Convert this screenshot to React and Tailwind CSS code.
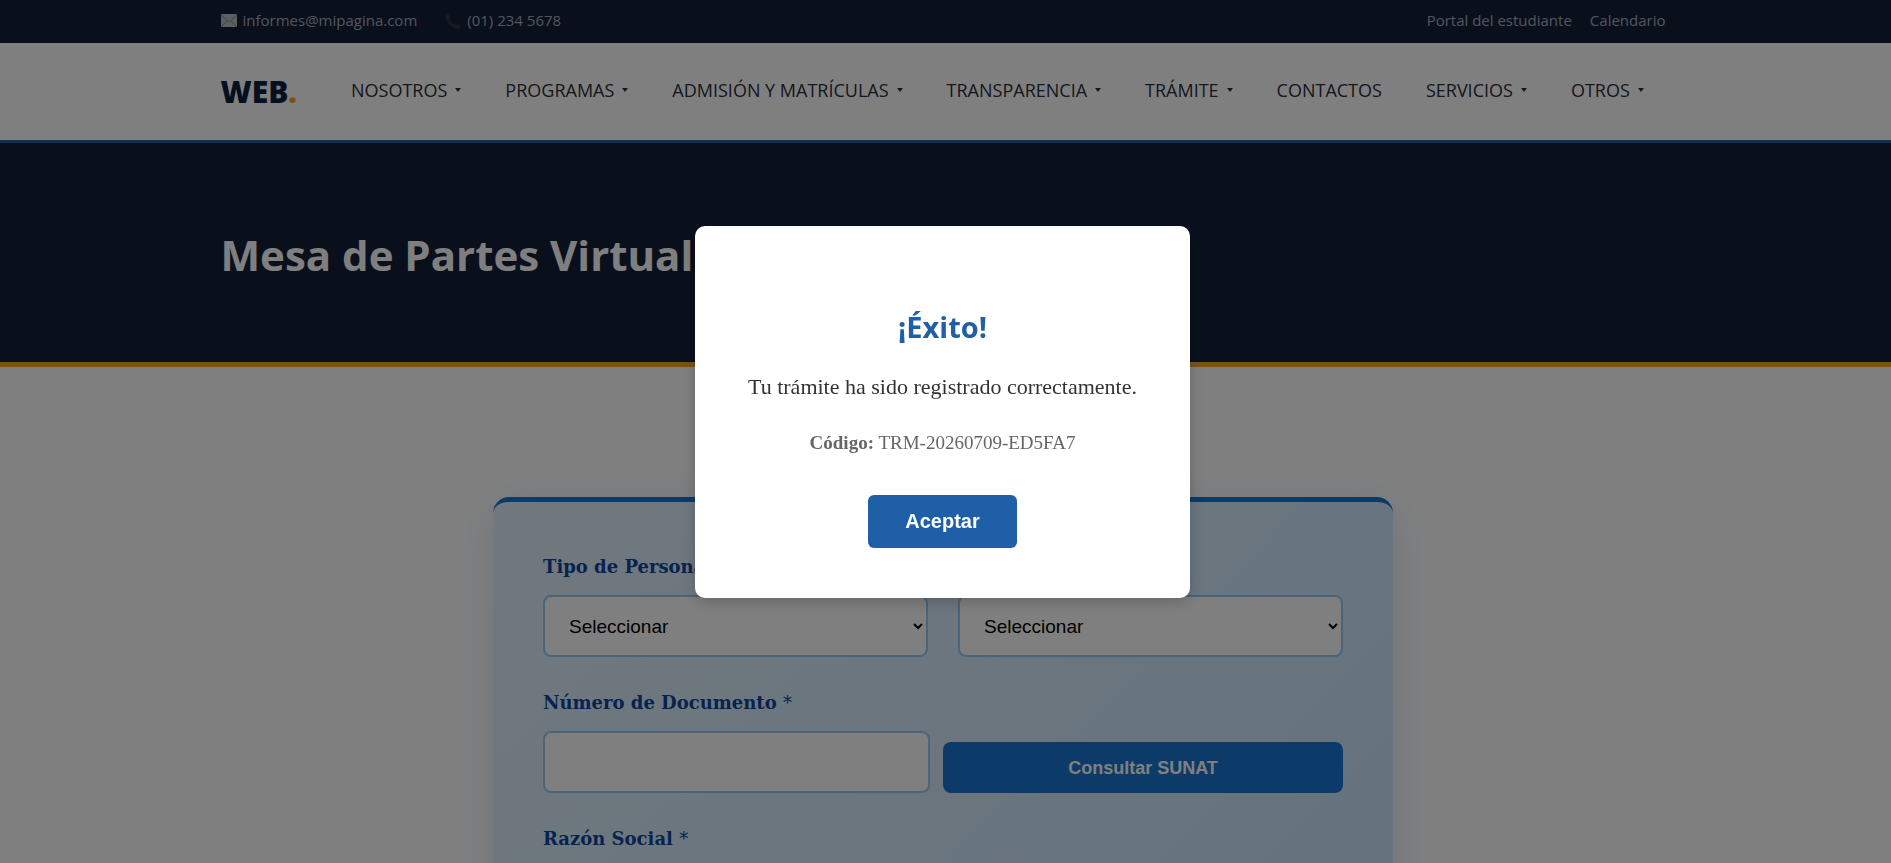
import React, { useState } from 'react';

const navItems = [
  { label: 'NOSOTROS', menu: true },
  { label: 'PROGRAMAS', menu: true },
  { label: 'ADMISIÓN Y MATRÍCULAS', menu: true },
  { label: 'TRANSPARENCIA', menu: true },
  { label: 'TRÁMITE', menu: true },
  { label: 'CONTACTOS', menu: false },
  { label: 'SERVICIOS', menu: true },
  { label: 'OTROS', menu: true },
];

const MailIcon = () => (
  <svg width="16" height="13" viewBox="0 0 16 13" aria-hidden="true">
    <rect width="16" height="13" rx="1" fill="#b8bcc0" />
    <path d="M0.5 1 L6.5 7 Q8 8.2 9.5 7 L15.5 1 M0.5 12.5 L6 6.8 M15.5 12.5 L10 6.8" fill="none" stroke="#7d848a" strokeWidth="1" />
  </svg>
);

const PhoneIcon = () => (
  <svg width="16" height="16" viewBox="0 0 16 16" aria-hidden="true">
    <path d="M1.2 0.8 Q2.6 -0.4 3.8 0.8 L5.2 3.2 Q5.6 4.4 4.4 5.2 Q4.2 8.6 8.8 11.2 L10.4 10.6 Q11.4 9.8 12.4 10.6 L15.2 12.4 Q16.4 13.6 14.8 15 Q12.6 16.8 8.4 14.6 Q1.8 11 0.4 4.8 Q-0.2 2.2 1.2 0.8 Z" fill="#2f3335" />
  </svg>
);

const TopBar = () => (
  <div className="pr-[5px] bg-[#132039] text-[#a5adb8] text-[15px] leading-[23px]">
    <div className="max-w-[1445px] mx-auto pt-[9px] pb-[11px] flex justify-between">
      <div className="flex gap-7">
        <span className="flex items-center gap-[6px]"><MailIcon /> informes@mipagina.com</span>
        <span className="flex items-center gap-[6px]"><PhoneIcon /> (01) 234 5678</span>
      </div>
      <div className="flex gap-[18px]">
        <a href="#portal">Portal del estudiante</a>
        <a href="#calendario">Calendario</a>
      </div>
    </div>
  </div>
);

const NavBar = () => (
  <header className="pr-[5px] bg-white border-b-[3px] border-[#1e5fa8]">
    <div className="max-w-[1445px] h-[97px] mx-auto flex items-center">
      <a href="#inicio" className="text-[30px] font-extrabold text-[#0b1f3f] mr-[54px]">
        WEB<span className="text-[#f5a623]">.</span>
      </a>
      <nav className="flex gap-11 pb-1 text-lg font-medium text-[#2b2f3a] whitespace-nowrap">
        {navItems.map((item) => (
          <a key={item.label} href="#menu" className="flex items-center gap-2">
            {item.label}
            {item.menu && (
              <svg width="6" height="4" viewBox="0 0 6 4" aria-hidden="true"><path d="M0 0h6L3 4z" fill="currentColor" /></svg>
            )}
          </a>
        ))}
      </nav>
    </div>
  </header>
);

const Field = ({ id, label, children }) => (
  <div className="flex flex-col gap-[14px]">
    <label htmlFor={id} className="text-lg leading-7 font-bold text-[#0d47a1]">
      {label} <span className="font-normal">*</span>
    </label>
    {children}
  </div>
);

const inputClass = 'w-full h-[62px] bg-white border-2 border-[#90caf9] rounded-lg text-black text-[19px] font-["Liberation_Sans",sans-serif]';

const TramiteForm = () => (
  <form className="max-w-[900px] min-h-[1200px] mx-auto px-[50px] pt-[51px] pb-12 border-t-[5px] border-[#1976d2] rounded-2xl bg-linear-135 from-[#e3f2fd] to-[#bbdefb] shadow-[0_10px_40px_rgba(25,118,210,0.15)] space-y-8 font-['DejaVu_Serif',serif]">
    <div className="grid grid-cols-2 gap-[30px]">
      <Field id="persona" label="Tipo de Persona">
        <select id="persona" className={`${inputClass} pl-5 pr-[2px]`}>
          <option>Seleccionar</option>
        </select>
      </Field>
      <Field id="tramite" label="Tipo de Trámite">
        <select id="tramite" className={`${inputClass} pl-5 pr-[2px]`}>
          <option>Seleccionar</option>
        </select>
      </Field>
    </div>
    <div className="flex items-end gap-[13px]">
      <div className="w-[387px]">
        <Field id="documento" label="Número de Documento">
          <input id="documento" type="text" className={`${inputClass} px-6`} />
        </Field>
      </div>
      <button type="button" className="flex-1 h-[51px] rounded-lg bg-[#1976d2] text-white text-lg font-bold font-['Liberation_Sans',sans-serif]">
        Consultar SUNAT
      </button>
    </div>
    <Field id="razon" label="Razón Social">
      <input id="razon" type="text" className={`${inputClass} px-6`} />
    </Field>
  </form>
);

const SuccessModal = ({ onClose }) => (
  <div className="fixed inset-0 pr-[6px] bg-black/50 flex items-center justify-center">
    <div role="dialog" aria-labelledby="exito" className="w-[495px] mb-10 pt-[81px] pb-[50px] flex flex-col items-center bg-white rounded-[10px] shadow-[0_4px_15px_rgba(0,0,0,0.2)]">
      <h2 id="exito" className="text-[29px] leading-10 font-bold text-[#1e5fa8]">¡Éxito!</h2>
      <p className="mt-6 text-[22px] leading-8 text-[#333] font-['Liberation_Serif',serif]">
        Tu trámite ha sido registrado correctamente.
      </p>
      <p className="mt-6 text-[19px] leading-8 text-[#666] font-['Liberation_Serif',serif]">
        <strong>Código:</strong> TRM-20260709-ED5FA7
      </p>
      <button type="button" onClick={onClose} className="mt-9 w-[149px] h-[53px] rounded-md bg-[#1e5fa8] text-white text-xl font-bold font-['Liberation_Sans',sans-serif]">
        Aceptar
      </button>
    </div>
  </div>
);

const App = () => {
  const [open, setOpen] = useState(true);

  return (
    <div className="h-screen overflow-hidden bg-white font-['Open_Sans','Noto_Sans',sans-serif]">
      <TopBar />
      <NavBar />
      <section className="pr-[5px] bg-[#132039] border-b-[5px] border-[#f5a623]">
        <div className="max-w-[1445px] mx-auto pt-[80px] pb-[75px]">
          <h1 className="text-[42px] leading-[64px] font-bold text-white">Mesa de Partes Virtual</h1>
        </div>
      </section>
      <main className="pt-[130px] pr-[5px]">
        <TramiteForm />
      </main>
      {open && <SuccessModal onClose={() => setOpen(false)} />}
    </div>
  );
};

export default App;
